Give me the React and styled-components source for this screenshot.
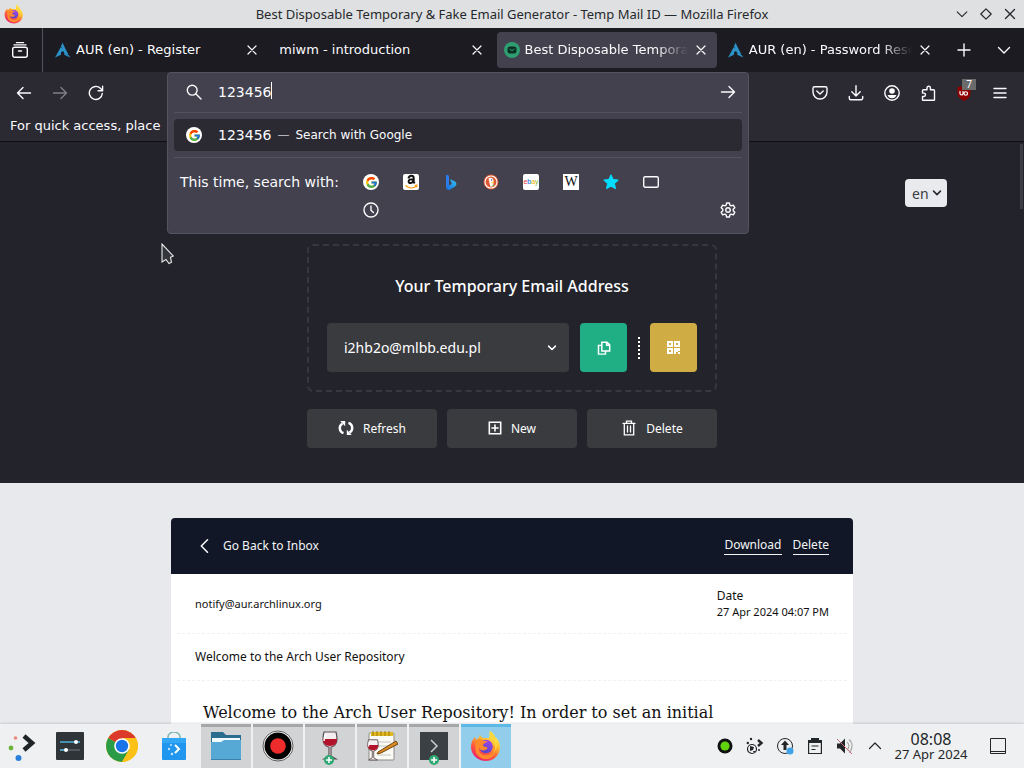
import React from "react";
import styled, { createGlobalStyle } from "styled-components";
import { SiArchlinux } from "react-icons/si";
import { FcGoogle } from "react-icons/fc";

const chromeFont = '"DejaVu Sans", sans-serif';
const pageFont = '"Noto Sans", "Open Sans", sans-serif';

const GlobalStyle = createGlobalStyle`
  * { box-sizing: border-box; }
  body { margin: 0; font-family: ${pageFont}; }
  button, select, input { font: inherit; color: inherit; }
  button { border: 0; padding: 0; background: none; }
  svg { display: block; flex: none; }
`;

const Desktop = styled.div`
  display: flex;
  flex-direction: column;
  height: 100vh;
  overflow: hidden;
  position: relative;
  background: #1c1b22;
`;

/* ---------- window title ---------- */

const TitleBar = styled.header`
  display: grid;
  grid-template-columns: 72px 1fr 74px;
  align-items: center;
  flex: none;
  height: 28px;
  padding: 0 2px 0 4px;
  background: #dfe0e2;
  color: #26292c;
`;

const WindowTitle = styled.div`
  text-align: center;
  font-size: 13px;
  line-height: 20px;
  white-space: nowrap;
  overflow: hidden;
  text-overflow: ellipsis;
`;

const WindowButtons = styled.div`
  display: flex;
  justify-content: flex-end;
`;

const WindowButton = styled.button`
  display: grid;
  place-items: center;
  width: 24px;
  height: 24px;
`;

/* ---------- tabs ---------- */

const TabStrip = styled.nav`
  display: flex;
  align-items: center;
  flex: none;
  height: 44px;
  background: #1c1b22;
  color: #fbfbfe;
  font-family: ${chromeFont};
`;

const ViewButton = styled.button`
  display: grid;
  place-items: center;
  width: 43px;
  height: 44px;
  padding-right: 2px;
  border-right: 1px solid #55545e;
`;

const Tabs = styled.div`
  display: flex;
  flex: 1;
  min-width: 0;
  gap: 4px;
  padding: 0 5px 0 5px;
`;

const Tab = styled.div`
  display: flex;
  align-items: center;
  flex: 1;
  min-width: 0;
  gap: 5px;
  height: 36px;
  padding: 0 8px 0 7px;
  border-radius: 4px;
  background: ${(p) => (p.$active ? "#42414d" : "transparent")};
`;

const TabTitle = styled.span`
  flex: 1;
  min-width: 0;
  overflow: hidden;
  white-space: nowrap;
  font-size: 13px;
  line-height: 20px;
  mask-image: ${(p) => (p.$fade ? "linear-gradient(to left, transparent, #000 32px)" : "none")};
`;

const CloseButton = styled.button`
  display: grid;
  place-items: center;
  flex: none;
  width: 16px;
  height: 24px;
`;

const StripButton = styled.button`
  display: grid;
  place-items: center;
  width: 36px;
  height: 36px;
  margin-right: ${(p) => (p.$gap ? "4px" : "2px")};
`;

/* ---------- navigation ---------- */

const Toolbar = styled.div`
  display: flex;
  align-items: center;
  flex: none;
  height: 41px;
  padding: 0 6px;
  background: #2b2a33;
  color: #fbfbfe;
`;

const ToolGroup = styled.div`
  display: flex;
`;

const ToolButton = styled.button`
  display: grid;
  place-items: center;
  position: relative;
  width: 36px;
  height: 36px;
  opacity: ${(p) => (p.disabled ? 0.4 : 1)};
`;

const Badge = styled.span`
  position: absolute;
  top: 4px;
  right: 6px;
  width: 14px;
  height: 11px;
  background: #6b6b6b;
  font: 10px/11px ${pageFont};
  color: #fff;
  text-align: center;
`;

const UrlSlot = styled.form`
  flex: 1;
  align-self: stretch;
  position: relative;
  margin: 0 53px;
  font-family: ${chromeFont};
`;

const UrlPopup = styled.div`
  position: absolute;
  z-index: 2;
  top: 0;
  left: 0;
  right: 0;
  padding: 0 6px 9px;
  border: 1px solid #54535f;
  border-radius: 4px;
  background: #42414d;
`;

const UrlRow = styled.div`
  display: flex;
  align-items: center;
  height: 40px;
  padding: 0 6px 1px 12px;
  border-bottom: 1px solid #53525f;
`;

const UrlField = styled.input`
  flex: 1;
  min-width: 0;
  margin: 0;
  padding: 0;
  border: 0;
  outline: 0;
  background: none;
  font-size: 14px;
  line-height: 20px;
`;

const UrlText = styled.label`
  display: flex;
  align-items: center;
  flex: 1;
  gap: 16px;
`;

const FieldBox = styled.span`
  display: flex;
  flex: 1;
  position: relative;
`;

const Caret = styled.span`
  position: absolute;
  top: 0;
  left: 53px;
  width: 1px;
  height: 17px;
  background: #fff;
`;

const Result = styled.button`
  display: flex;
  align-items: center;
  width: 100%;
  height: 32px;
  margin: 6px 0;
  padding: 0 12px;
  border-radius: 4px;
  background: #2b2a33;
  text-align: left;
  font-size: 14px;
  line-height: 20px;
`;

const ResultTitle = styled.span`
  margin-left: 16px;
`;

const ResultAction = styled.span`
  font-size: 12px;
  &::before {
    content: "—";
    margin: 0 6px 0 6px;
    color: #b5b4bd;
  }
`;

const SearchWith = styled.div`
  display: flex;
  align-items: flex-end;
  padding: 10px 0 0;
  border-top: 1px solid #53525f;
  font-size: 14px;
`;

const SearchLabel = styled.span`
  align-self: flex-start;
  width: 177px;
  padding-left: 6px;
  line-height: 28px;
  white-space: nowrap;
`;

const Engines = styled.div`
  display: flex;
  flex-wrap: wrap;
  flex: 1;
  max-width: 340px;
`;

const Engine = styled.button`
  display: grid;
  place-items: center;
  width: 40px;
  height: 28px;
`;

const SettingsButton = styled(Engine)`
  width: 28px;
  margin-left: auto;
`;

const Circle = styled.span`
  display: grid;
  place-items: center;
  width: 16px;
  height: 16px;
  border-radius: 50%;
  background: #fff;
`;

const Tile = styled.span`
  display: grid;
  place-items: center;
  width: 16px;
  height: 16px;
  border-radius: ${(p) => (p.$round ? "2px" : "0")};
  background: #fff;
  color: #111;
`;

const WikiMark = styled.span`
  font: 14px/16px "Liberation Serif", serif;
`;

const EbayMark = styled.span`
  font: 7px/12px "Liberation Sans", sans-serif;
  color: ${(p) => p.$color};
`;

const EbayWord = styled.span`
  display: flex;
`;

const BookmarkBar = styled.div`
  flex: none;
  height: 29px;
  padding: 3px 10px;
  border-bottom: 1px solid #0e0d13;
  background: #2b2a33;
  color: #fbfbfe;
  font: 13px/20px ${chromeFont};
  white-space: nowrap;
`;

/* ---------- web page ---------- */

const Viewport = styled.main`
  flex: 1;
  min-height: 0;
  overflow: hidden;
  position: relative;
  background: #e7e9ec;
`;

const ScrollThumb = styled.div`
  position: absolute;
  top: 2px;
  right: 1px;
  width: 3px;
  height: 65px;
  background: #3e3f45;
`;

const Hero = styled.section`
  display: flex;
  flex-direction: column;
  align-items: center;
  padding: 37px 0 35px;
  background: #23232b;
  color: #fff;
`;

const LanguageRow = styled.div`
  display: flex;
  justify-content: flex-end;
  width: 100%;
  padding-right: 77px;
`;

const SelectWrap = styled.span`
  display: flex;
  position: relative;
  ${(p) => p.$grow && "flex: 1; margin-right: 11px;"}

  svg {
    position: absolute;
    top: 50%;
    right: ${(p) => (p.$grow ? "12px" : "5px")};
    transform: translateY(-50%);
    pointer-events: none;
  }
`;

const LanguageSelect = styled.select`
  appearance: none;
  width: 42px;
  height: 28px;
  padding: 0 0 0 7px;
  border: 0;
  border-radius: 4px;
  background: #e9eaee;
  color: #3c3c44;
  font-size: 14px;
`;

const AddressBox = styled.div`
  width: 100%;
  max-width: 410px;
  margin-top: 37px;
  padding: 28px 18px 18px;
  border: 2px dashed #37383e;
  border-radius: 6px;
`;

const AddressTitle = styled.h1`
  margin: 0 0 25px;
  font-size: 16px;
  font-weight: 500;
  line-height: 24px;
  text-align: center;
`;

const AddressRow = styled.div`
  display: flex;
  align-items: center;
`;

const AddressSelect = styled.select`
  appearance: none;
  width: 100%;
  height: 49px;
  padding: 0 32px 0 17px;
  border: 0;
  border-radius: 4px;
  background: #3a3b3f;
  font-size: 14px;
`;

const SquareButton = styled.button`
  display: grid;
  place-items: center;
  width: 47px;
  height: 49px;
  border-radius: 4px;
  background: ${(p) => p.$color};
`;

const Dots = styled.span`
  height: 22px;
  margin: 0 10px 0 11px;
  border-left: 2px dotted #fff;
`;

const Actions = styled.div`
  display: flex;
  gap: 10px;
  width: 100%;
  max-width: 410px;
  margin-top: 17px;
`;

const ActionButton = styled.button`
  display: flex;
  align-items: center;
  justify-content: center;
  gap: 9px;
  flex: 1;
  height: 39px;
  padding-bottom: 1px;
  border-radius: 4px;
  background: #3a3b3f;
  font-size: 12px;
`;

const MailCard = styled.article`
  max-width: 682px;
  margin: 35px auto 0;
  border-radius: 4px 4px 0 0;
  overflow: hidden;
  background: #fff;
  color: #111;
  font-size: 12px;
`;

const MailHeader = styled.header`
  display: flex;
  align-items: center;
  height: 56px;
  padding: 0 24px 1px 26px;
  background: #111726;
  color: #f3f4f6;
`;

const BackLink = styled.a`
  display: flex;
  align-items: center;
  gap: 10px;
  margin-right: auto;
  color: inherit;
  text-decoration: none;
`;

const MailLink = styled.a`
  margin-left: 11px;
  border-bottom: 1px solid #f3f4f6;
  color: inherit;
  line-height: 18px;
  text-decoration: none;
`;

const MailRow = styled.div`
  display: flex;
  align-items: center;
  justify-content: space-between;
  height: ${(p) => (p.$tall ? "60px" : "47px")};
  margin: 0 6px;
  padding: 0 18px 1px;
  border-bottom: 1px dashed #f1f1f3;
`;

const Sender = styled.span`
  font-size: 11px;
`;

const DateBlock = styled.div`
  line-height: 16px;
`;

const Stamp = styled.time`
  display: block;
  font-size: 11px;
  line-height: 15px;
`;

const MailBody = styled.p`
  margin: 0;
  padding: 20px 32px;
  font: 16px/24px "DejaVu Serif", serif;
`;

/* ---------- taskbar ---------- */

const Taskbar = styled.footer`
  display: flex;
  flex: none;
  height: 44px;
  background: #eff0f1;
  color: #232629;
  box-shadow: 0 -1px 2px rgba(0, 0, 0, 0.12);
  z-index: 1;
`;

const Task = styled.button`
  display: grid;
  place-items: center;
  width: 50px;
  margin: 0 1px;
  box-shadow: inset 0 3px ${(p) => (p.$active ? "#5cb8e6" : p.$open ? "#a5a7a9" : "transparent")};
  background: ${(p) => (p.$active ? "#93cdec" : p.$open ? "#d2d3d4" : "transparent")};
`;

const StartButton = styled.button`
  display: grid;
  place-items: center;
  width: 44px;
  padding-bottom: 1px;
`;

const Tray = styled.div`
  display: flex;
  align-items: center;
  margin-left: auto;
`;

const TrayButton = styled.button`
  display: grid;
  place-items: center;
  width: 30px;
  height: 44px;
`;

const Clock = styled.div`
  display: flex;
  flex-direction: column;
  width: 82px;
  font-size: 13px;
  line-height: 15px;
  text-align: center;
  white-space: nowrap;
`;

const ClockTime = styled.time`
  font-size: 16px;
  line-height: 16px;
`;

const DesktopButton = styled(TrayButton)`
  width: 52px;
`;

const Pointer = styled.div`
  position: absolute;
  z-index: 3;
  top: 243px;
  left: 161px;
  pointer-events: none;
`;

/* ---------- icons ---------- */

const Line = ({ size = 16, w = 1.4, children, ...rest }) => (
  <svg width={size} height={size} viewBox="0 0 16 16" fill="none" stroke="currentColor" strokeWidth={w} strokeLinecap="round" strokeLinejoin="round" {...rest}>
    {children}
  </svg>
);

const Cross = ({ size = 16 }) => <Line size={size} w={1.2}><path d="M4 4l8 8M12 4l-8 8" /></Line>;
const ChevronDown = ({ size = 16, w = 1.4 }) => <Line size={size} w={w}><path d="M2.500 5.500L8 11l5.500-5.500" /></Line>;

function Firefox({ size, id }) {
  return (
    <svg width={size} height={size} viewBox="0 0 32 32">
      <defs>
        <linearGradient id={id + "a"} x1="0.8" y1="0.1" x2="0.3" y2="1">
          <stop offset="0" stopColor="#fff44f" />
          <stop offset="0.35" stopColor="#ffb52c" />
          <stop offset="0.65" stopColor="#ff5a3c" />
          <stop offset="1" stopColor="#e91f70" />
        </linearGradient>
        <linearGradient id={id + "b"} x1="0.7" y1="0" x2="0.3" y2="1">
          <stop offset="0" stopColor="#a646e6" />
          <stop offset="1" stopColor="#4c45c9" />
        </linearGradient>
      </defs>
      <path fill={`url(#${id}a)`} d="M20 1c3 2 4 4 5 6 3 2 5 6 5 10 0 8-6 14-14 14S1 25 1 17c0-4 1-7 4-10l1 3c1-1 2-2 3-2 0-1 0-2 1-3 1 2 2 3 4 3h5c1-3 0-5 1-7z" />
      <circle cx="16" cy="16.500" r="6.800" fill={`url(#${id}b)`} />
      <path fill="#ff8a2c" d="M6 10c3-2 6-1 7 1h4c0 2-4 2-4 4 0 1 1 2 3 2 1 0 2 1 1 2-2 2-6 2-8-1-1 4 3 8 8 7 5 0 8-5 6-10 4 3 3 9-1 12-5 4-13 2-16-4-1-5-1-9 0-13z" />
      <path fill="#ffd83f" d="M20 1c-1 4 1 7 3 9 3 4 3 9 0 13 5-4 5-11 2-16-1-2-2-4-5-6z" />
    </svg>
  );
}

const GoogleMark = () => <Circle><FcGoogle size={13} /></Circle>;
const ArchMark = () => <SiArchlinux size={16} color="#2b93c9" />;

const TempMailMark = () => (
  <svg width="16" height="16" viewBox="0 0 16 16">
    <circle cx="8" cy="8" r="8" fill="#2f9d72" />
    <rect x="3.500" y="4.500" width="9" height="7" rx="2.500" fill="#0c2f22" />
    <path d="M5.500 7L8 8.600 10.500 7" fill="none" stroke="#2f9d72" />
  </svg>
);

const AmazonMark = () => (
  <Tile $round>
    <svg width="16" height="16" viewBox="0 0 16 16" fill="none">
      <path d="M5.500 4.400C5.800 2.600 7 1.700 8.300 1.700c1.600 0 2.400.8 2.400 2.300V8l1 1.300M10.400 5.300c-2.900-.1-4.800.4-4.800 2.200 0 2.500 4.400 1.900 4.800-.9" stroke="#111" strokeWidth="2" />
      <path d="M2.500 11.500c3.300 3 7.700 3 11 .5M12 11.400l2-.2-.5 1.900" stroke="#f90" strokeWidth="1.200" />
    </svg>
  </Tile>
);

const BingMark = () => (
  <svg width="16" height="16" viewBox="0 0 16 16">
    <defs>
      <linearGradient id="bing" x1="0" y1="1" x2="1" y2="0">
        <stop offset="0" stopColor="#1668e0" />
        <stop offset="1" stopColor="#37c6f0" />
      </linearGradient>
    </defs>
    <path d="M3 .5l3 1.300V11.500L3 14z" fill="#2a7de8" />
    <path d="M7 5l4.500 2.200c2.500 1.300 2.500 4 .5 5.300L6.500 16C5 16 3 15.500 3 13.500L6 11.500l2.800-1.600z" fill="url(#bing)" />
  </svg>
);

const DuckMark = () => (
  <svg width="16" height="16" viewBox="0 0 16 16">
    <circle cx="8" cy="8" r="7.500" fill="#de5833" />
    <circle cx="8" cy="8" r="6" fill="none" stroke="#fff" strokeWidth="1.100" />
    <path d="M5.500 4.500c1.500-1.500 4.800-1 5 2l-.3 5.500-2.700.8-.8-2.800z" fill="#fff" />
    <path d="M8.200 8l3-.4-.5 1.200-2 .6z" fill="#fc3" />
    <circle cx="8.600" cy="6" r="0.700" fill="#2d4f8e" />
    <path d="M8.600 10.800l2.200.2v1.400z" fill="#4cba3c" />
  </svg>
);

const Glass = ({ x = 0, y = 0, s = 1 }) => (
  <g transform={`translate(${x} ${y}) scale(${s})`}>
    <path d="M10 1h12c2 8 1 14-5 15v9l5 3H10l5-3v-9C9 15 8 9 10 1z" fill="#f4eef0" stroke="#5d5054" strokeWidth="1.200" />
    <path d="M9 8h14c0 4-2 7-7 7s-7-3-7-7z" fill="#b3122b" />
    <path d="M11 4l-1 6" stroke="#fff" strokeWidth="1.500" />
  </g>
);

const PlusDot = ({ cx, cy }) => (
  <g>
    <circle cx={cx} cy={cy} r="5" fill="#2fa873" />
    <path d={`M${cx - 3} ${cy}h6M${cx} ${cy - 3}v6`} stroke="#fff" strokeWidth="1.500" />
  </g>
);

const tabs = [
  { title: "AUR (en) - Register", icon: <ArchMark /> },
  { title: "miwm - introduction" },
  { title: "Best Disposable Temporary", icon: <TempMailMark />, active: true, fade: true },
  { title: "AUR (en) - Password Reset", icon: <ArchMark />, fade: true },
];

const engines = [
  ["Google", <GoogleMark />],
  ["Amazon", <AmazonMark />],
  ["Bing", <BingMark />],
  ["DuckDuckGo", <DuckMark />],
  ["eBay", (
    <Tile $round>
      <EbayWord>
        <EbayMark $color="#e53238">e</EbayMark>
        <EbayMark $color="#0064d2">b</EbayMark>
        <EbayMark $color="#f5af02">a</EbayMark>
        <EbayMark $color="#86b817">y</EbayMark>
      </EbayWord>
    </Tile>
  )],
  ["Wikipedia", <Tile><WikiMark>W</WikiMark></Tile>],
  ["Bookmarks", (
    <svg width="16" height="16" viewBox="0 0 16 16">
      <path fill="#00ddff" stroke="#00ddff" strokeLinejoin="round" d="M8 .8l2.200 4.700 5.100.6-3.800 3.500 1 5.100L8 12.200l-4.500 2.500 1-5.100L.7 6.100l5.100-.6z" />
    </svg>
  )],
  ["Tabs", <Line><rect x="0.700" y="2.700" width="14.600" height="10.600" rx="1.500" /></Line>],
  ["History", <Line><circle cx="8" cy="8" r="7" /><path d="M8 4v4.200l2.400 2.400" /></Line>],
];

export default function App() {
  return (
    <Desktop>
      <GlobalStyle />

      <TitleBar>
        <Firefox size={20} id="title" />
        <WindowTitle>Best Disposable Temporary &amp; Fake Email Generator - Temp Mail ID — Mozilla Firefox</WindowTitle>
        <WindowButtons>
          <WindowButton aria-label="Minimize"><ChevronDown w={1.3} size={14} /></WindowButton>
          <WindowButton aria-label="Maximize"><Line w={1.2}><path d="M8 2.800L13.200 8 8 13.200 2.800 8z" /></Line></WindowButton>
          <WindowButton aria-label="Close"><Cross size={18} /></WindowButton>
        </WindowButtons>
      </TitleBar>

      <TabStrip>
        <ViewButton aria-label="View recent browsing">
          <Line><rect x="0.700" y="5.300" width="14.600" height="10" rx="2" /><path d="M2 2.900h12M4.500.6h7M6.500 9h3" /></Line>
        </ViewButton>
        <Tabs>
          {tabs.map((tab) => (
            <Tab key={tab.title} $active={tab.active}>
              {tab.icon}
              <TabTitle $fade={tab.fade}>{tab.title}</TabTitle>
              <CloseButton aria-label="Close tab"><Cross /></CloseButton>
            </Tab>
          ))}
        </Tabs>
        <StripButton $gap aria-label="New tab"><Line><path d="M8 2v12M2 8h12" /></Line></StripButton>
        <StripButton aria-label="List all tabs"><ChevronDown /></StripButton>
      </TabStrip>

      <Toolbar>
        <ToolGroup>
          <ToolButton aria-label="Back"><Line><path d="M14.500 8H1.500M7 2.500L1.500 8 7 13.500" /></Line></ToolButton>
          <ToolButton aria-label="Forward" disabled><Line><path d="M1.500 8h13M9 2.500L14.500 8 9 13.500" /></Line></ToolButton>
          <ToolButton aria-label="Reload"><Line><path d="M14.300 8.500A6.500 6.500 0 1 1 12.600 3.500L14.500 5.500M14.600 1.300v4.500h-4.500" /></Line></ToolButton>
        </ToolGroup>

        <UrlSlot onSubmit={(e) => e.preventDefault()}>
          <UrlPopup>
            <UrlRow>
              <UrlText>
                <Line><circle cx="6.200" cy="6.200" r="4.900" /><path d="M10 10l5 5" /></Line>
                <FieldBox>
                  <UrlField aria-label="Search or enter address" defaultValue="123456" />
                  <Caret />
                </FieldBox>
              </UrlText>
              <Line><path d="M1.500 8h13M9 2.500L14.500 8 9 13.500" /></Line>
            </UrlRow>
            <Result type="button">
              <GoogleMark />
              <ResultTitle>123456</ResultTitle>
              <ResultAction>Search with Google</ResultAction>
            </Result>
            <SearchWith>
              <SearchLabel>This time, search with:</SearchLabel>
              <Engines>
                {engines.map(([name, icon]) => (
                  <Engine type="button" key={name} aria-label={name}>{icon}</Engine>
                ))}
              </Engines>
              <SettingsButton type="button" aria-label="Search settings">
                <Line>
                  <circle cx="8" cy="8" r="2.200" />
                  <path d="M6.600 1h2.800l.5 2.100 1.300.8 2.100-.7 1.500 2.500-1.600 1.500v1.600l1.600 1.500-1.500 2.500-2.100-.7-1.300.8-.5 2.100H6.600l-.5-2.100-1.300-.8-2.100.7-1.500-2.500 1.600-1.500V7.200L1.200 5.700l1.500-2.500 2.100.7 1.300-.8z" />
                </Line>
              </SettingsButton>
            </SearchWith>
          </UrlPopup>
        </UrlSlot>

        <ToolGroup>
          <ToolButton aria-label="Save to Pocket"><Line><path d="M2.500 1.800h11a1.500 1.500 0 0 1 1.500 1.500V7A7 7 0 0 1 1 7V3.300a1.500 1.500 0 0 1 1.500-1.500zM4.800 6L8 9l3.200-3" /></Line></ToolButton>
          <ToolButton aria-label="Downloads"><Line><path d="M8 .8v10M3.800 6.800L8 11l4.200-4.200M1.300 11.500v1.800a1.500 1.500 0 0 0 1.500 1.500h10.400a1.500 1.500 0 0 0 1.500-1.500v-1.800" /></Line></ToolButton>
          <ToolButton aria-label="Account"><Line><circle cx="8" cy="8" r="7.200" /><g fill="currentColor" stroke="none"><circle cx="8" cy="6" r="2.800" /><path d="M3.500 10h9c-.5 2-2.500 3.300-4.500 3.300S4 12 3.500 10z" /></g></Line></ToolButton>
          <ToolButton aria-label="Extensions"><Line><path d="M2.500 14.800v-3.300h1.300a1.700 1.700 0 0 0 0-3.400H2.500V5.800a1 1 0 0 1 1-1H7V3a1.700 1.700 0 0 1 3.400 0v1.800h3.100a1 1 0 0 1 1 1v9a.5.5 0 0 1-.5.5H3a.5.5 0 0 1-.5-.5z" /></Line></ToolButton>
          <ToolButton aria-label="uBlock Origin">
            <svg width="16" height="16" viewBox="0 0 16 16">
              <path d="M8 0c2 1.500 4 2 6.500 2v6c0 4-3 6-6.500 8-3.500-2-6.500-4-6.500-8V2C4 2 6 1.500 8 0z" fill="#8d0000" />
              <path d="M4 6v2.500a1.500 1.500 0 0 0 3 0V6m1 2.500a1.700 1.700 0 1 0 3.500 0 1.700 1.700 0 1 0-3.500 0" fill="none" stroke="#fff" strokeWidth="1.200" />
            </svg>
            <Badge>7</Badge>
          </ToolButton>
          <ToolButton aria-label="Menu"><Line><path d="M2 3.500h12M2 8h12M2 12.500h12" /></Line></ToolButton>
        </ToolGroup>
      </Toolbar>

      <BookmarkBar>For quick access, place</BookmarkBar>

      <Viewport>
        <Hero>
          <LanguageRow>
            <SelectWrap>
              <LanguageSelect aria-label="Language" defaultValue="en"><option>en</option></LanguageSelect>
              <Line size={10} w={2.6} color="#2c2c34"><path d="M2.500 5L8 10.500 13.500 5" /></Line>
            </SelectWrap>
          </LanguageRow>
          <AddressBox>
            <AddressTitle>Your Temporary Email Address</AddressTitle>
            <AddressRow>
              <SelectWrap $grow>
                <AddressSelect aria-label="Email address" defaultValue="i2hb2o@mlbb.edu.pl"><option>i2hb2o@mlbb.edu.pl</option></AddressSelect>
                <Line size={10} w={2.4}><path d="M2.500 5L8 10.500 13.500 5" /></Line>
              </SelectWrap>
              <SquareButton $color="#20ae84" aria-label="Copy">
                <Line size={14} w={1.700} strokeLinejoin="miter"><path d="M5.500 1.300h6l3 3v7.200h-9zM11 1.300v3.500h3.500M5.500 5H1.700v10h8v-3.500" /></Line>
              </SquareButton>
              <Dots />
              <SquareButton $color="#d0ad44" aria-label="QR code">
                <svg width="13" height="13" viewBox="0 0 13 13" fill="#fff">
                  <path fillRule="evenodd" d="M0 0h6v6H0zM2 2v2h2V2zM7 0h6v6H7zM9 2v2h2V2zM0 7h6v6H0zM2 9v2h2V9zM7 7h6v3h-2v1H9v2H7zM11 11h2v2h-2z" />
                </svg>
              </SquareButton>
            </AddressRow>
          </AddressBox>
          <Actions>
            <ActionButton>
              <svg width="16" height="16" viewBox="0 0 16 16" fill="none" stroke="#fff" strokeWidth="2.400">
                <path d="M5.500 13.200A5.300 5.300 0 0 1 4.500 3.500M10.500 2.800a5.300 5.300 0 0 1 1 9.700" />
                <path d="M2.200 1h5v5.200zM13.800 15H8.800V9.800z" fill="#fff" stroke="none" />
              </svg>
              Refresh
            </ActionButton>
            <ActionButton>
              <Line size={14} w={1.800} strokeLinejoin="miter"><path d="M1.500 1.500h13v13h-13zM8 4.500v7M4.500 8h7" /></Line>
              New
            </ActionButton>
            <ActionButton>
              <Line w={1.300} strokeLinejoin="miter"><path d="M2 3.300h12M5.500 3.300V1.200h5v2.100M3.300 3.300v11.500h9.400V3.300M6.500 6v6M9.500 6v6" /></Line>
              Delete
            </ActionButton>
          </Actions>
        </Hero>

        <MailCard>
          <MailHeader>
            <BackLink href="#inbox">
              <Line w={1.600}><path d="M10.500 1.800L4.300 8l6.200 6.200" /></Line>
              Go Back to Inbox
            </BackLink>
            <MailLink href="#download">Download</MailLink>
            <MailLink href="#delete">Delete</MailLink>
          </MailHeader>
          <MailRow $tall>
            <Sender>notify@aur.archlinux.org</Sender>
            <DateBlock>Date<Stamp>27 Apr 2024 04:07 PM</Stamp></DateBlock>
          </MailRow>
          <MailRow>Welcome to the Arch User Repository</MailRow>
          <MailBody>Welcome to the Arch User Repository! In order to set an initial</MailBody>
        </MailCard>
        <ScrollThumb />
      </Viewport>

      <Taskbar>
        <StartButton aria-label="Application launcher">
          <svg width="30" height="30" viewBox="0 0 30 30">
            <path d="M17 5l8 7-8 7" fill="none" stroke="#1f2326" strokeWidth="4.500" />
            <circle cx="8.500" cy="7" r="1.800" fill="#e9897b" />
            <circle cx="4" cy="17" r="2.400" fill="#6bb53a" />
            <circle cx="11.500" cy="27" r="3" fill="#2980d9" />
          </svg>
        </StartButton>
        <Task aria-label="System settings">
          <svg width="28" height="28" viewBox="0 0 28 28">
            <rect width="28" height="28" rx="1" fill="#2f3439" />
            <path d="M4 10h20" stroke="#4fb0d8" strokeWidth="1.500" /><path d="M4 18h20" stroke="#5b6268" strokeWidth="1.500" />
            <path d="M4 18h6" stroke="#4fb0d8" strokeWidth="1.500" />
            <circle cx="20" cy="10" r="2" fill="#fff" /><circle cx="10" cy="18" r="2" fill="#fff" />
          </svg>
        </Task>
        <Task aria-label="Chrome">
          <svg width="32" height="32" viewBox="0 0 32 32">
            <circle cx="16" cy="16" r="16" fill="#fbc116" />
            <path d="M16 16L2.200 8A16 16 0 0 1 29.800 8z" fill="#db3a2b" />
            <path d="M2.200 8a16 16 0 0 0 13.800 24l7-12-7-4z" fill="#2a9b47" />
            <path d="M29.800 8H16l7 12-7 12A16 16 0 0 0 29.800 8z" fill="#fbc116" />
            <circle cx="16" cy="16" r="7.800" fill="#fff" /><circle cx="16" cy="16" r="6.200" fill="#1a73e8" />
          </svg>
        </Task>
        <Task aria-label="Discover">
          <svg width="26" height="28" viewBox="0 0 26 28">
            <path d="M7 10V5a6 5 0 0 1 12 0v5" fill="none" stroke="#7eb5b4" strokeWidth="1.500" />
            <rect x="1" y="6" width="24" height="22" rx="1" fill="#2196ee" />
            <path d="M1 6h24v5H1z" fill="#32a7f5" />
            <path d="M14 13l4 4-4 4" fill="none" stroke="#fff" strokeWidth="2" />
            <g fill="#bde3ff"><circle cx="10" cy="13" r="1" /><circle cx="8" cy="17" r="1.200" /><circle cx="11" cy="22" r="1.300" /></g>
          </svg>
        </Task>
        <Task $open aria-label="Files">
          <svg width="30" height="28" viewBox="0 0 30 28">
            <path d="M0 0h12l3 3h15v12H0z" fill="#2b6d8f" />
            <path d="M1 6h28v8H1z" fill="#f2fbff" />
            <path d="M0 10h10l3-2h17v20H0z" fill="#55a9d4" />
            <path d="M0 27h30v1H0z" fill="#3a83ab" />
          </svg>
        </Task>
        <Task $open aria-label="Screen recorder">
          <svg width="32" height="32" viewBox="0 0 32 32">
            <circle cx="16" cy="16" r="15" fill="#fff" stroke="#5a5a5a" /><circle cx="16" cy="16" r="13.500" fill="#000" /><circle cx="16" cy="16" r="7.800" fill="#ee2c2c" />
          </svg>
        </Task>
        <Task $open aria-label="Wine">
          <svg width="32" height="38" viewBox="0 0 32 38"><Glass y={4} /><PlusDot cx={15} cy={33} /></svg>
        </Task>
        <Task $open aria-label="Wine notepad">
          <svg width="32" height="32" viewBox="0 0 32 32">
            <rect x="3" y="3" width="25" height="27" rx="1" fill="#fbfbf6" stroke="#8c8a84" />
            <path d="M5 2h22v4H5z" fill="#e0b920" />
            <path d="M7 1v5M11 1v5M15 1v5M19 1v5M23 1v5" stroke="#9b7a0a" />
            <path d="M12 12h13M12 16h13M12 25h13" stroke="#c5c4bf" />
            <Glass x={-5} y={9} s={0.75} />
            <path d="M12 22L30 11l2 3-17 9-4 1z" fill="#d98a22" stroke="#6f4614" />
          </svg>
        </Task>
        <Task $open aria-label="Terminal">
          <svg width="28" height="38" viewBox="0 0 28 38">
            <rect y="5" width="28" height="28" fill="#3a4044" /><path d="M11 13l6 6-6 6" fill="none" stroke="#c9cccd" strokeWidth="1.500" />
            <PlusDot cx={14} cy={33} />
          </svg>
        </Task>
        <Task $active aria-label="Firefox"><Firefox size={32} id="task" /></Task>

        <Tray>
          <TrayButton aria-label="Recording status">
            <svg width="16" height="16" viewBox="0 0 16 16"><circle cx="8" cy="8" r="7.500" fill="#111" /><circle cx="8" cy="8" r="4.600" fill="#5fd30d" /></svg>
          </TrayButton>
          <TrayButton aria-label="Input source">
            <svg width="18" height="18" viewBox="0 0 18 18">
              <path d="M12 3l3.500 3L12 9" fill="none" stroke="#232629" strokeWidth="2.400" />
              <circle cx="6" cy="12" r="4.500" fill="none" stroke="#232629" strokeWidth="1.200" /><path d="M4 9l4 1-1 3-3 1zM7 14h3l-2 2z" fill="#232629" />
              <circle cx="5" cy="2" r="1.200" fill="#232629" /><circle cx="1.800" cy="6" r="1.200" fill="#232629" /><circle cx="13" cy="13" r="1" fill="#232629" />
            </svg>
          </TrayButton>
          <TrayButton aria-label="Updates">
            <svg width="18" height="18" viewBox="0 0 18 18">
              <circle cx="9" cy="9" r="7.500" fill="none" stroke="#232629" /><path d="M9 3.500l4 4.500h-2.500v5h-3V8H5z" fill="#232629" />
              <circle cx="14" cy="14" r="3.500" fill="#3fa3e8" />
            </svg>
          </TrayButton>
          <TrayButton aria-label="Clipboard">
            <svg width="16" height="16" viewBox="0 0 16 16" fill="none" stroke="#232629" strokeWidth="1.200">
              <path d="M1.600 2.500h12.800v13H1.600zM4.500 8h7M4.500 11.500h4" /><path d="M1 2h3V0h8v2h3v3H1z" fill="#232629" stroke="none" />
            </svg>
          </TrayButton>
          <TrayButton aria-label="Muted">
            <svg width="18" height="18" viewBox="0 0 18 18">
              <path d="M1 6.500h3L9 1.500v15l-5-5H1z" fill="#232629" />
              <path d="M11 5c2.500 2 2.500 6 0 8M13 2.500c4 3 4 10 0 13" fill="none" stroke="#a9a9aa" strokeWidth="1.200" />
              <path d="M1 2l15 15" stroke="#c96a74" />
            </svg>
          </TrayButton>
          <TrayButton aria-label="Show hidden icons"><Line w={1.200}><path d="M2.500 10.500L8 5l5.500 5.500" /></Line></TrayButton>
          <Clock><ClockTime>08:08</ClockTime><span>27 Apr 2024</span></Clock>
          <DesktopButton aria-label="Show desktop">
            <svg width="16" height="16" viewBox="0 0 16 16" fill="none" stroke="#232629"><path d="M.5.5h15v15H.5zM.5 13.500h15" /></svg>
          </DesktopButton>
        </Tray>
      </Taskbar>

      <Pointer>
        <svg width="13" height="22" viewBox="0 0 13 22">
          <path d="M1 1v18l4-2.500 3 4 2.500-1.200-1-5L12.300 13z" fill="#33363a" stroke="#e8e8e8" strokeWidth="1.100" />
        </svg>
      </Pointer>
    </Desktop>
  );
}
